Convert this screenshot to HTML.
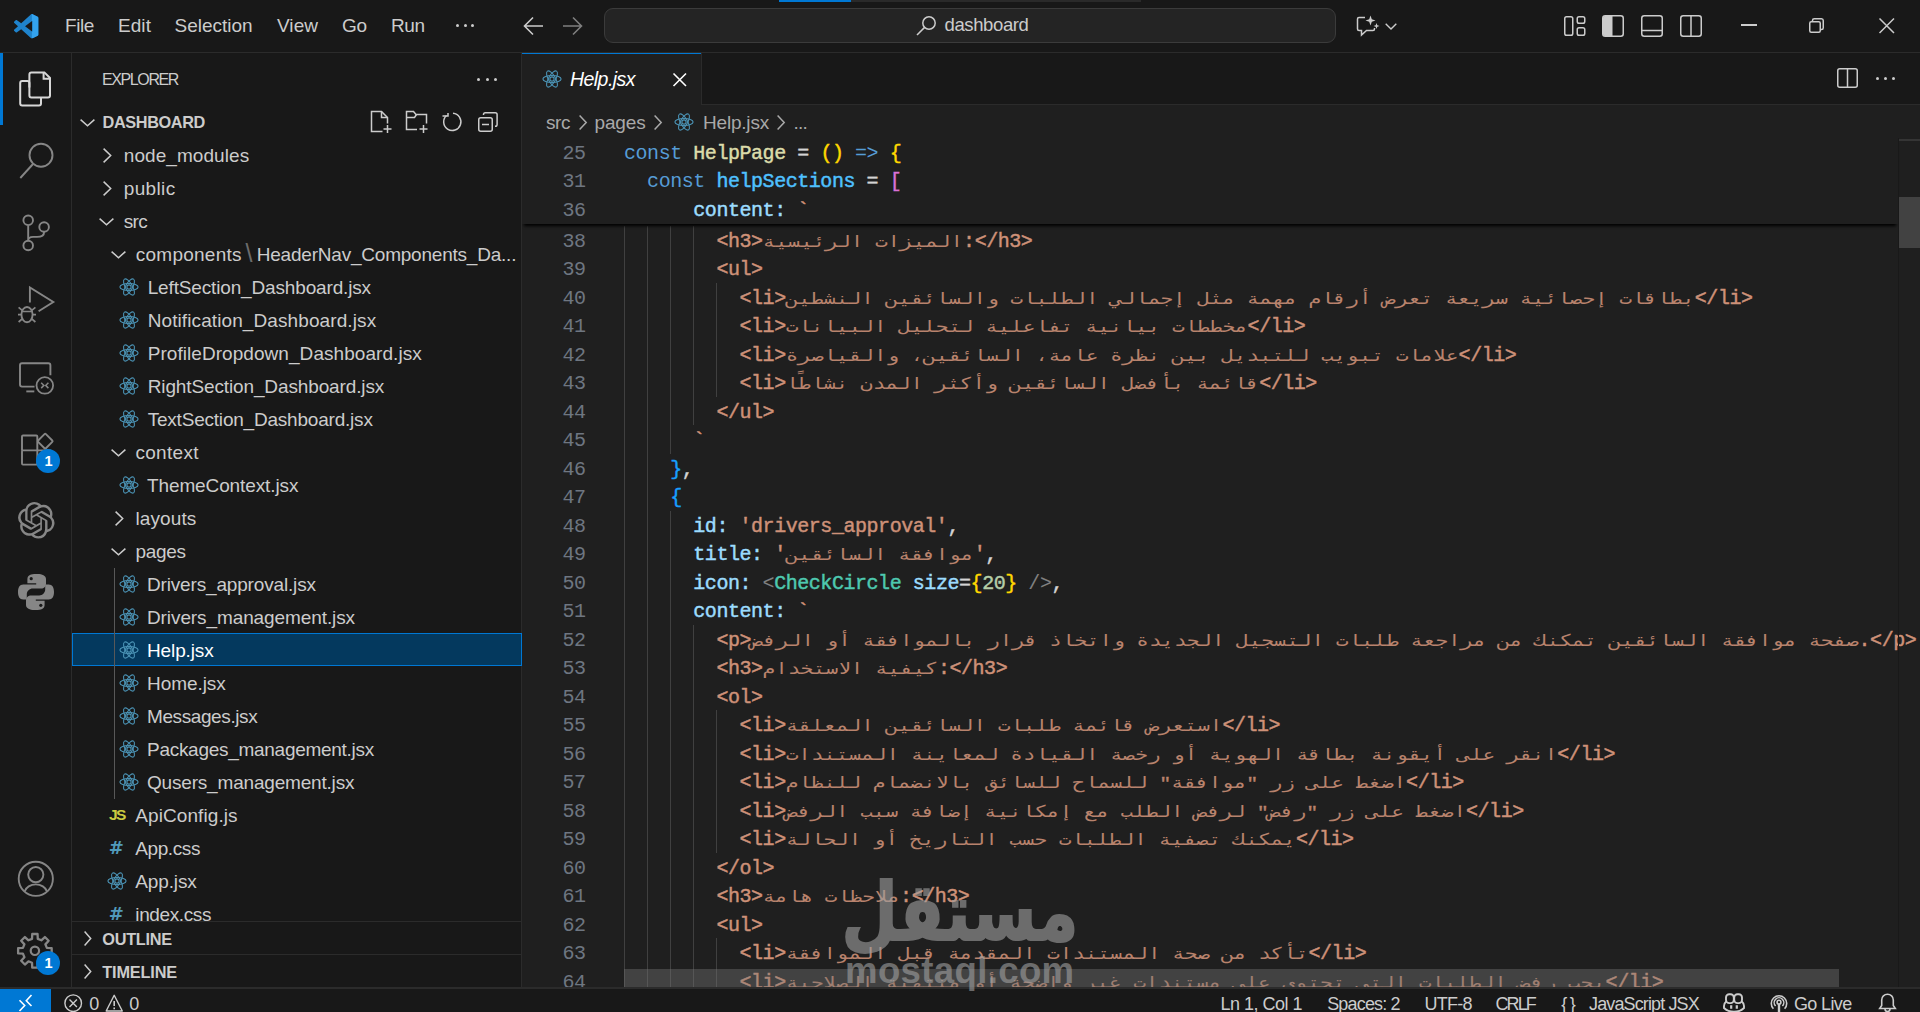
<!DOCTYPE html>
<html lang="en"><head><meta charset="utf-8"><title>Help.jsx - dashboard - Visual Studio Code</title>
<style>
*{box-sizing:border-box;margin:0;padding:0}
html,body{width:1920px;height:1012px;overflow:hidden;background:#181818}
body{position:relative;font-family:"Liberation Sans","DejaVu Sans",sans-serif;color:#cccccc;font-size:19px}
.abs{position:absolute}
.t{position:absolute;white-space:pre;line-height:1}
svg{position:absolute;overflow:visible}
#titlebar{position:absolute;left:0;top:0;width:1920px;height:53px;border-bottom:1px solid #2b2b2b;background:#181818}
#actbar{position:absolute;left:0;top:53px;width:72px;height:935px;border-right:1px solid #2b2b2b;background:#181818}
#sidebar{position:absolute;left:72px;top:53px;width:450px;height:935px;border-right:1px solid #2b2b2b;background:#181818;overflow:hidden}
#editor{position:absolute;left:522px;top:53px;width:1398px;height:935px;background:#1f1f1f;overflow:hidden}
#status{position:absolute;left:0;top:987px;width:1920px;height:33px;border-top:1px solid #2b2b2b;background:#181818}
.row{position:absolute;left:0;width:449px;height:33px}
.row .lbl{position:absolute;top:6px;white-space:pre;font-size:19px;line-height:22px;color:#cccccc;transform-origin:0 50%}
.hdr{font-weight:bold;font-size:16px}
.code{position:absolute;left:0;height:28.5px;line-height:28.5px;white-space:pre;font-family:"Liberation Mono","DejaVu Sans Mono",monospace;font-size:20px;letter-spacing:-0.452px;font-weight:normal;-webkit-text-stroke:0.45px;color:#d4d4d4}
.code span{line-height:28.5px}
.ln{position:absolute;left:0;width:62px;text-align:right;height:28.5px;line-height:28.5px;font-family:"Liberation Mono","DejaVu Sans Mono",monospace;font-size:20px;letter-spacing:-0.452px;color:#6e7681;white-space:pre}
.arun{display:inline-block;-webkit-text-stroke:0;opacity:0.88;letter-spacing:0;direction:rtl;font-family:"DejaVu Sans Mono",monospace;font-size:20.93px;font-weight:normal;line-height:20px;height:20px;transform:scaleY(0.78);transform-origin:0 17.24px;vertical-align:baseline}
.code .arun,.code .arun span{line-height:20px}
.arun .sp{font-family:"Liberation Mono","DejaVu Sans Mono",monospace;font-size:19.247px;letter-spacing:0;font-weight:normal;-webkit-text-stroke:0.45px}
.k{color:#569cd6;font-weight:normal;-webkit-text-stroke:0}
.f{color:#dcdcaa}
.c{color:#4fc1ff}
.p{color:#9cdcfe}
.s{color:#ce9178}
.g{color:#ffd700}
.o{color:#da70d6}
.b{color:#179fff}
.n{color:#b5cea8}
.tg{color:#4ec9b0}
.gr{color:#808080;font-weight:normal;-webkit-text-stroke:0}
.guide{position:absolute;width:1px;background:#404040}
</style></head>
<body>
<div id="titlebar"></div>
<div class="abs" style="left:851.00px;top:0.00px;width:290.00px;height:2.00px;background:#2a2a2a;"></div>
<div class="abs" style="left:779.00px;top:0.00px;width:72.00px;height:2.00px;background:#0078d4;"></div>
<svg style="left:13.70px;top:14.30px;" width="24.5" height="24.5" viewBox="0 0 100 100" fill="none"><defs><clipPath id="vsc"><path d="M70.9119 99.3171C72.4869 99.9307 74.2828 99.8914 75.8725 99.1264L96.4608 89.2197C98.6242 88.1787 100 85.9892 100 83.5872V16.4133C100 14.0113 98.6243 11.8218 96.4609 10.7808L75.8725 0.873756C73.7862 -0.130129 71.3446 0.11576 69.5135 1.44695C69.252 1.63711 69.0028 1.84943 68.769 2.08341L29.3551 38.0415L12.1872 25.0096C10.589 23.7965 8.35363 23.8959 6.86933 25.2461L1.36303 30.2549C-0.452552 31.9064 -0.454633 34.7627 1.35853 36.417L16.2471 50.0001L1.35853 63.5832C-0.454633 65.2374 -0.452552 68.0938 1.36303 69.7453L6.86933 74.7541C8.35363 76.1043 10.589 76.2037 12.1872 74.9905L29.3551 61.9587L68.769 97.9167C69.3925 98.5406 70.1246 99.0104 70.9119 99.3171ZM75.0152 27.2989L45.1091 50.0001L75.0152 72.7012V27.2989Z" clip-rule="evenodd"/></clipPath></defs><path d="M70.9119 99.3171C72.4869 99.9307 74.2828 99.8914 75.8725 99.1264L96.4608 89.2197C98.6242 88.1787 100 85.9892 100 83.5872V16.4133C100 14.0113 98.6243 11.8218 96.4609 10.7808L75.8725 0.873756C73.7862 -0.130129 71.3446 0.11576 69.5135 1.44695C69.252 1.63711 69.0028 1.84943 68.769 2.08341L29.3551 38.0415L12.1872 25.0096C10.589 23.7965 8.35363 23.8959 6.86933 25.2461L1.36303 30.2549C-0.452552 31.9064 -0.454633 34.7627 1.35853 36.417L16.2471 50.0001L1.35853 63.5832C-0.454633 65.2374 -0.452552 68.0938 1.36303 69.7453L6.86933 74.7541C8.35363 76.1043 10.589 76.2037 12.1872 74.9905L29.3551 61.9587L68.769 97.9167C69.3925 98.5406 70.1246 99.0104 70.9119 99.3171ZM75.0152 27.2989L45.1091 50.0001L75.0152 72.7012V27.2989Z" fill="#1f83cc" fill-rule="evenodd"/><rect x="73" y="0" width="27" height="100" fill="#33a3ef" clip-path="url(#vsc)"/></svg>
<div class="abs" style="left:456.00px;top:23.50px;width:3.00px;height:3.00px;background:#cccccc;border-radius:50%"></div>
<div class="abs" style="left:463.50px;top:23.50px;width:3.00px;height:3.00px;background:#cccccc;border-radius:50%"></div>
<div class="abs" style="left:471.00px;top:23.50px;width:3.00px;height:3.00px;background:#cccccc;border-radius:50%"></div>
<svg style="left:523.00px;top:16.00px;" width="21" height="20" viewBox="0 0 21 20" fill="none"><path d="M10 1.5L1.5 10l8.5 8.5M1.5 10H20" stroke="#cccccc" stroke-width="1.6"/></svg>
<svg style="left:562.00px;top:16.00px;" width="21" height="20" viewBox="0 0 21 20" fill="none"><path d="M11 1.5l8.5 8.5-8.5 8.5M19.5 10H1" stroke="#7f7f7f" stroke-width="1.6"/></svg>
<div class="abs" style="left:604.00px;top:8.00px;width:732.00px;height:35.00px;background:#242424;border:1px solid #3b3b3b;border-radius:9px"></div>
<svg style="left:916.00px;top:15.00px;" width="21" height="21" viewBox="0 0 21 21" fill="none"><circle cx="13" cy="8" r="6.2" stroke="#cccccc" stroke-width="1.5"/><path d="M8.6 12.4L1 20" stroke="#cccccc" stroke-width="1.5"/></svg>
<svg style="left:1356.00px;top:14.00px;" width="24" height="24" viewBox="0 0 24 24" fill="none"><path d="M9 3.5H3a1.5 1.5 0 0 0-1.5 1.5v10A1.5 1.5 0 0 0 3 16.5h2.5v4.5l5-4.5H17a1.5 1.5 0 0 0 1.5-1.5V14" stroke="#cccccc" stroke-width="1.5"/><path d="M14.5 1.5l1.3 3.7 3.7 1.3-3.7 1.3-1.3 3.7-1.3-3.7-3.7-1.3 3.7-1.3z" fill="#cccccc"/><path d="M20.5 9l.8 2.2 2.2.8-2.2.8-.8 2.2-.8-2.2-2.2-.8 2.2-.8z" fill="#cccccc"/></svg>
<svg style="left:1385.00px;top:23.00px;" width="12" height="7" viewBox="0 0 12 7" fill="none"><path d="M0.7 0.7l5.3 5.3 5.3-5.3" stroke="#cccccc" stroke-width="1.4"/></svg>
<svg style="left:1563.50px;top:16.00px;" width="22" height="20" viewBox="0 0 22 20" fill="none"><rect x="0.75" y="0.75" width="8" height="18.5" rx="1.8" stroke="#cccccc" stroke-width="1.5"/><rect x="13.25" y="0.75" width="7.5" height="6.5" rx="1.8" stroke="#cccccc" stroke-width="1.5"/><rect x="13.25" y="11.75" width="7.5" height="7.5" rx="1.8" stroke="#cccccc" stroke-width="1.5"/></svg>
<svg style="left:1602.00px;top:15.00px;" width="22" height="22" viewBox="0 0 22 22" fill="none"><rect x="0.75" y="0.75" width="20.5" height="20.5" rx="2.5" stroke="#cccccc" stroke-width="1.5"/><path d="M1 3a2 2 0 0 1 2-2h7.5v20H3a2 2 0 0 1-2-2z" fill="#cccccc"/></svg>
<svg style="left:1641.00px;top:15.00px;" width="22" height="22" viewBox="0 0 22 22" fill="none"><rect x="0.75" y="0.75" width="20.5" height="20.5" rx="2.5" stroke="#cccccc" stroke-width="1.5"/><path d="M1 15.5h20" stroke="#cccccc" stroke-width="1.5"/></svg>
<svg style="left:1679.50px;top:15.00px;" width="22" height="22" viewBox="0 0 22 22" fill="none"><rect x="0.75" y="0.75" width="20.5" height="20.5" rx="2.5" stroke="#cccccc" stroke-width="1.5"/><path d="M11 1v20" stroke="#cccccc" stroke-width="1.5"/></svg>
<div class="abs" style="left:1741.00px;top:24.30px;width:15.50px;height:1.80px;background:#cccccc;"></div>
<svg style="left:1809.00px;top:18.00px;" width="15" height="15" viewBox="0 0 15 15" fill="none"><rect x="0.75" y="3.75" width="10.5" height="10.5" rx="1.5" stroke="#cccccc" stroke-width="1.5"/><path d="M3.5 3.5V2.5A1.8 1.8 0 0 1 5.3 0.75h7.2A1.8 1.8 0 0 1 14.25 2.5v7.2a1.8 1.8 0 0 1-1.75 1.8H11.5" stroke="#cccccc" stroke-width="1.5"/></svg>
<svg style="left:1878.50px;top:18.00px;" width="15.5" height="15.5" viewBox="0 0 15.5 15.5" fill="none"><path d="M0.5 0.5l14.5 14.5M15 0.5L0.5 15" stroke="#cccccc" stroke-width="1.5"/></svg>
<span class="t" style="left:65.00px;top:16.42px;color:#cccccc;font-size:19.00px;font-weight:normal;font-style:normal;letter-spacing:-0.406px;">File</span>
<span class="t" style="left:118.00px;top:16.42px;color:#cccccc;font-size:19.00px;font-weight:normal;font-style:normal;letter-spacing:0.062px;">Edit</span>
<span class="t" style="left:174.50px;top:16.42px;color:#cccccc;font-size:19.00px;font-weight:normal;font-style:normal;letter-spacing:-0.019px;">Selection</span>
<span class="t" style="left:277.00px;top:16.42px;color:#cccccc;font-size:19.00px;font-weight:normal;font-style:normal;letter-spacing:0.039px;">View</span>
<span class="t" style="left:342.00px;top:16.42px;color:#cccccc;font-size:19.00px;font-weight:normal;font-style:normal;letter-spacing:-0.180px;">Go</span>
<span class="t" style="left:391.00px;top:16.42px;color:#cccccc;font-size:19.00px;font-weight:normal;font-style:normal;letter-spacing:-0.453px;">Run</span>
<span class="t" style="left:944.50px;top:16.34px;color:#cccccc;font-size:18.50px;font-weight:normal;font-style:normal;letter-spacing:-0.382px;">dashboard</span>
<div id="actbar"></div>
<div class="abs" style="left:0.00px;top:53.00px;width:3.00px;height:72.00px;background:#0078d4;"></div>
<svg style="left:0.00px;top:53.00px;" width="72" height="72" viewBox="0 0 72 72" fill="none"><path d="M29.4 34.5v-4.5a2 2 0 0 0-2-2h-5.2a2 2 0 0 0-2 2v20.5a2 2 0 0 0 2 2h16.8a2 2 0 0 0 2-2v-5.5" stroke="#d7d7d7" stroke-width="2" /><path d="M31.4 19.4h13l5.6 5.6v17.6a2 2 0 0 1-2 2H31.4a2 2 0 0 1-2-2V21.4a2 2 0 0 1 2-2z" stroke="#d7d7d7" stroke-width="2"/><path d="M43.6 19.6v6.2h6.2" stroke="#d7d7d7" stroke-width="2"/></svg>
<svg style="left:0.00px;top:125.00px;" width="72" height="72" viewBox="0 0 72 72" fill="none"><circle cx="41" cy="30.3" r="11.5" stroke="#868686" stroke-width="1.9"/><path d="M33 39l-12.7 14" stroke="#868686" stroke-width="1.9"/></svg>
<svg style="left:0.00px;top:197.00px;" width="72" height="72" viewBox="0 0 72 72" fill="none"><circle cx="28.2" cy="23.3" r="4.8" stroke="#868686" stroke-width="1.9"/><circle cx="28.2" cy="48.5" r="4.8" stroke="#868686" stroke-width="1.9"/><circle cx="44.1" cy="30" r="4.8" stroke="#868686" stroke-width="1.9"/><path d="M28.2 28.2v15.5M44.1 34.9c0 4-3 5-7 5h-4c-3 0-4.9 1.5-4.9 3.8" stroke="#868686" stroke-width="1.9"/></svg>
<svg style="left:0.00px;top:269.00px;" width="72" height="72" viewBox="0 0 72 72" fill="none"><path d="M29.9 33.5V18.5L53.3 33 38.6 42.2" stroke="#868686" stroke-width="1.9" stroke-linejoin="miter"/><ellipse cx="27" cy="45.6" rx="5.6" ry="7.6" stroke="#868686" stroke-width="1.9"/><path d="M21.5 42.5h11M18 45.6h3.4M32.6 45.6H36M18.6 38.4l3.6 3M35.4 38.4l-3.6 3M18.6 53l3.6-3.2M35.4 53l-3.6-3.2" stroke="#868686" stroke-width="1.7"/></svg>
<svg style="left:0.00px;top:341.00px;" width="72" height="72" viewBox="0 0 72 72" fill="none"><path d="M34.5 45.6H22a2 2 0 0 1-2-2V24.2a2 2 0 0 1 2-2h26.4a2 2 0 0 1 2 2v10" stroke="#868686" stroke-width="1.9"/><path d="M26.3 50.4h8" stroke="#868686" stroke-width="1.9"/><circle cx="44.8" cy="44.4" r="8.3" stroke="#868686" stroke-width="1.8"/><path d="M41.2 41.7l2.700 2.700-2.700 2.700M48.400 41.7l-2.700 2.700 2.700 2.700" stroke="#868686" stroke-width="1.5"/></svg>
<svg style="left:0.00px;top:413.00px;" width="72" height="72" viewBox="0 0 72 72" fill="none"><path d="M37.3 37.4H23a1 1 0 0 0-1 1v12.2a1 1 0 0 0 1 1h14.3zM37.3 37.4V23.5a1 1 0 0 0-1-1H23a1 1 0 0 0-1 1v13.9M37.3 37.4h13a1 1 0 0 1 1 1v12.2a1 1 0 0 1-1 1h-13" stroke="#868686" stroke-width="1.9"/><rect x="39.7" y="22.7" width="11" height="11" rx="1" transform="rotate(45 45.2 28.2)" stroke="#868686" stroke-width="1.9"/></svg>
<div class="abs" style="left:36.00px;top:448.80px;width:24.00px;height:24.00px;background:#0078d4;border-radius:50%"></div>
<svg style="left:17.50px;top:502.00px;" width="36.6" height="36.6" viewBox="0 0 24 24" fill="none"><path d="M22.2819 9.8211a5.9847 5.9847 0 0 0-.5157-4.9108 6.0462 6.0462 0 0 0-6.5098-2.9A6.0651 6.0651 0 0 0 4.9807 4.1818a5.9847 5.9847 0 0 0-3.9977 2.9 6.0462 6.0462 0 0 0 .7427 7.0966 5.98 5.98 0 0 0 .511 4.9107 6.051 6.051 0 0 0 6.5146 2.9001A5.9847 5.9847 0 0 0 13.2599 24a6.0557 6.0557 0 0 0 5.7718-4.2058 5.9894 5.9894 0 0 0 3.9977-2.9001 6.0557 6.0557 0 0 0-.7475-7.0729zm-9.022 12.6081a4.4755 4.4755 0 0 1-2.8764-1.0408l.1419-.0804 4.7783-2.7582a.7948.7948 0 0 0 .3927-.6813v-6.7369l2.02 1.1686a.071.071 0 0 1 .038.052v5.5826a4.504 4.504 0 0 1-4.4945 4.4944zm-9.6607-4.1254a4.4708 4.4708 0 0 1-.5346-3.0137l.142.0852 4.783 2.7582a.7712.7712 0 0 0 .7806 0l5.8428-3.3685v2.3324a.0804.0804 0 0 1-.0332.0615L9.74 19.9502a4.4992 4.4992 0 0 1-6.1408-1.6464zM2.3408 7.8956a4.485 4.485 0 0 1 2.3655-1.9728V11.6a.7664.7664 0 0 0 .3879.6765l5.8144 3.3543-2.0201 1.1685a.0757.0757 0 0 1-.071 0l-4.8303-2.7865A4.504 4.504 0 0 1 2.3408 7.872zm16.5963 3.8558L13.1038 8.364 15.1192 7.2a.0757.0757 0 0 1 .071 0l4.8303 2.7913a4.4944 4.4944 0 0 1-.6765 8.1042v-5.6772a.79.79 0 0 0-.407-.667zm2.0107-3.0231l-.142-.0852-4.7735-2.7818a.7759.7759 0 0 0-.7854 0L9.409 9.2297V6.8974a.0662.0662 0 0 1 .0284-.0615l4.8303-2.7866a4.4992 4.4992 0 0 1 6.6802 4.66zM8.3065 12.863l-2.02-1.1638a.0804.0804 0 0 1-.038-.0567V6.0742a4.4992 4.4992 0 0 1 7.3757-3.4537l-.142.0805L8.704 5.459a.7948.7948 0 0 0-.3927.6813zm1.0976-2.3654l2.602-1.4998 2.6069 1.4998v2.9994l-2.5974 1.4997-2.6067-1.4997Z" fill="#868686"/></svg>
<svg style="left:17.80px;top:574.00px;" width="36" height="36" viewBox="0 0 36 36" fill="none"><path d="M17.8 0c-4.6 0-8.4 1.2-8.4 5v4.2h8.8v1.3H5.3C1.6 10.500 0 13.5 0 18s1.600 7.500 5.300 7.500H8.800V20.500c0-3.300 2.800-5.900 6-5.900h8.400c2.700 0 4.800-2.200 4.800-4.900V5c0-3.400-4-5-8.200-5z" fill="#868686"/><path d="M18.2 36c4.600 0 8.400-1.200 8.400-5v-4.200h-8.800v-1.300h12.900c3.700 0 5.300-3 5.300-7.500s-1.600-7.500-5.300-7.500h-3.500v5c0 3.300-2.800 5.900-6 5.900h-8.400c-2.700 0-4.800 2.200-4.800 4.900V31c0 3.400 4 5 8.200 5z" fill="#868686"/><circle cx="13.2" cy="4.700" r="1.600" fill="#181818"/><circle cx="22.800" cy="31.300" r="1.600" fill="#181818"/></svg>
<svg style="left:0.00px;top:843.00px;" width="72" height="72" viewBox="0 0 72 72" fill="none"><circle cx="35.8" cy="35.8" r="17.1" stroke="#868686" stroke-width="1.9"/><circle cx="35.8" cy="31.6" r="7.6" stroke="#868686" stroke-width="1.9"/><path d="M24.6 48.5a11.6 9.6 0 0 1 22.4 0" stroke="#868686" stroke-width="1.9"/></svg>
<svg style="left:0.00px;top:915.00px;" width="72" height="72" viewBox="0 0 72 72" fill="none"><path d="M32.24 19.01 L37.56 19.01 L37.77 23.84 L41.33 25.31 L44.89 22.05 L48.65 25.81 L45.39 29.37 L46.86 32.93 L51.69 33.14 L51.69 38.46 L46.86 38.67 L45.39 42.23 L48.65 45.79 L44.89 49.55 L41.33 46.29 L37.77 47.76 L37.56 52.59 L32.24 52.59 L32.03 47.76 L28.47 46.29 L24.91 49.55 L21.15 45.79 L24.41 42.23 L22.94 38.67 L18.11 38.46 L18.11 33.14 L22.94 32.93 L24.41 29.37 L21.15 25.81 L24.91 22.05 L28.47 25.31 L32.03 23.84Z" stroke="#868686" stroke-width="2.3" stroke-linejoin="round"/><circle cx="34.9" cy="35.800" r="4.2" stroke="#868686" stroke-width="2.2"/></svg>
<div class="abs" style="left:36.00px;top:951.00px;width:24.00px;height:24.00px;background:#0078d4;border-radius:50%"></div>
<span class="t" style="left:44.40px;top:453.73px;color:#ffffff;font-size:14.50px;font-weight:bold;font-style:normal;">1</span>
<span class="t" style="left:44.40px;top:955.93px;color:#ffffff;font-size:14.50px;font-weight:bold;font-style:normal;">1</span>
<div id="sidebar"></div>
<div class="abs" style="left:477.00px;top:77.50px;width:3.00px;height:3.00px;background:#cccccc;border-radius:50%"></div>
<div class="abs" style="left:485.50px;top:77.50px;width:3.00px;height:3.00px;background:#cccccc;border-radius:50%"></div>
<div class="abs" style="left:494.00px;top:77.50px;width:3.00px;height:3.00px;background:#cccccc;border-radius:50%"></div>
<svg style="left:79.70px;top:118.75px;" width="15" height="7.5" viewBox="0 0 15 7.5" fill="none"><polyline points="0.6,0.6 7.5,6.7 14.4,0.6" stroke="#cccccc" stroke-width="1.5" stroke-linejoin="miter"/></svg>
<div class="abs" style="left:72.00px;top:633.00px;width:449.50px;height:33.00px;background:#04395e;border:1px solid #0078d4"></div>
<div class="abs" style="left:114.00px;top:567.50px;width:1.00px;height:231.00px;background:#585858;"></div>
<svg style="left:103.35px;top:147.50px;" width="8.5" height="15" viewBox="0 0 8.5 15" fill="none"><polyline points="0.6,0.6 7.7,7.5 0.6,14.4" stroke="#cccccc" stroke-width="1.5" stroke-linejoin="miter"/></svg>
<svg style="left:103.35px;top:180.50px;" width="8.5" height="15" viewBox="0 0 8.5 15" fill="none"><polyline points="0.6,0.6 7.7,7.5 0.6,14.4" stroke="#cccccc" stroke-width="1.5" stroke-linejoin="miter"/></svg>
<svg style="left:99.30px;top:217.75px;" width="15" height="7.5" viewBox="0 0 15 7.5" fill="none"><polyline points="0.6,0.6 7.5,6.7 14.4,0.6" stroke="#cccccc" stroke-width="1.5" stroke-linejoin="miter"/></svg>
<svg style="left:111.00px;top:250.75px;" width="15" height="7.5" viewBox="0 0 15 7.5" fill="none"><polyline points="0.6,0.6 7.5,6.7 14.4,0.6" stroke="#cccccc" stroke-width="1.5" stroke-linejoin="miter"/></svg>
<svg style="left:118.50px;top:277.50px;" width="20" height="18" viewBox="0 0 20 18" fill="none"><ellipse cx="10" cy="9" rx="9.1" ry="3.5" transform="rotate(0 10 9)" stroke="#4b93b5" stroke-width="1.1"/><ellipse cx="10" cy="9" rx="9.1" ry="3.5" transform="rotate(60 10 9)" stroke="#4b93b5" stroke-width="1.1"/><ellipse cx="10" cy="9" rx="9.1" ry="3.5" transform="rotate(120 10 9)" stroke="#4b93b5" stroke-width="1.1"/><circle cx="10" cy="9" r="2.1" stroke="#4b93b5" stroke-width="1.1"/></svg>
<svg style="left:118.50px;top:310.50px;" width="20" height="18" viewBox="0 0 20 18" fill="none"><ellipse cx="10" cy="9" rx="9.1" ry="3.5" transform="rotate(0 10 9)" stroke="#4b93b5" stroke-width="1.1"/><ellipse cx="10" cy="9" rx="9.1" ry="3.5" transform="rotate(60 10 9)" stroke="#4b93b5" stroke-width="1.1"/><ellipse cx="10" cy="9" rx="9.1" ry="3.5" transform="rotate(120 10 9)" stroke="#4b93b5" stroke-width="1.1"/><circle cx="10" cy="9" r="2.1" stroke="#4b93b5" stroke-width="1.1"/></svg>
<svg style="left:118.50px;top:343.50px;" width="20" height="18" viewBox="0 0 20 18" fill="none"><ellipse cx="10" cy="9" rx="9.1" ry="3.5" transform="rotate(0 10 9)" stroke="#4b93b5" stroke-width="1.1"/><ellipse cx="10" cy="9" rx="9.1" ry="3.5" transform="rotate(60 10 9)" stroke="#4b93b5" stroke-width="1.1"/><ellipse cx="10" cy="9" rx="9.1" ry="3.5" transform="rotate(120 10 9)" stroke="#4b93b5" stroke-width="1.1"/><circle cx="10" cy="9" r="2.1" stroke="#4b93b5" stroke-width="1.1"/></svg>
<svg style="left:118.50px;top:376.50px;" width="20" height="18" viewBox="0 0 20 18" fill="none"><ellipse cx="10" cy="9" rx="9.1" ry="3.5" transform="rotate(0 10 9)" stroke="#4b93b5" stroke-width="1.1"/><ellipse cx="10" cy="9" rx="9.1" ry="3.5" transform="rotate(60 10 9)" stroke="#4b93b5" stroke-width="1.1"/><ellipse cx="10" cy="9" rx="9.1" ry="3.5" transform="rotate(120 10 9)" stroke="#4b93b5" stroke-width="1.1"/><circle cx="10" cy="9" r="2.1" stroke="#4b93b5" stroke-width="1.1"/></svg>
<svg style="left:118.50px;top:409.50px;" width="20" height="18" viewBox="0 0 20 18" fill="none"><ellipse cx="10" cy="9" rx="9.1" ry="3.5" transform="rotate(0 10 9)" stroke="#4b93b5" stroke-width="1.1"/><ellipse cx="10" cy="9" rx="9.1" ry="3.5" transform="rotate(60 10 9)" stroke="#4b93b5" stroke-width="1.1"/><ellipse cx="10" cy="9" rx="9.1" ry="3.5" transform="rotate(120 10 9)" stroke="#4b93b5" stroke-width="1.1"/><circle cx="10" cy="9" r="2.1" stroke="#4b93b5" stroke-width="1.1"/></svg>
<svg style="left:111.00px;top:448.75px;" width="15" height="7.5" viewBox="0 0 15 7.5" fill="none"><polyline points="0.6,0.6 7.5,6.7 14.4,0.6" stroke="#cccccc" stroke-width="1.5" stroke-linejoin="miter"/></svg>
<svg style="left:118.50px;top:475.50px;" width="20" height="18" viewBox="0 0 20 18" fill="none"><ellipse cx="10" cy="9" rx="9.1" ry="3.5" transform="rotate(0 10 9)" stroke="#4b93b5" stroke-width="1.1"/><ellipse cx="10" cy="9" rx="9.1" ry="3.5" transform="rotate(60 10 9)" stroke="#4b93b5" stroke-width="1.1"/><ellipse cx="10" cy="9" rx="9.1" ry="3.5" transform="rotate(120 10 9)" stroke="#4b93b5" stroke-width="1.1"/><circle cx="10" cy="9" r="2.1" stroke="#4b93b5" stroke-width="1.1"/></svg>
<svg style="left:114.95px;top:510.50px;" width="8.5" height="15" viewBox="0 0 8.5 15" fill="none"><polyline points="0.6,0.6 7.7,7.5 0.6,14.4" stroke="#cccccc" stroke-width="1.5" stroke-linejoin="miter"/></svg>
<svg style="left:111.00px;top:547.75px;" width="15" height="7.5" viewBox="0 0 15 7.5" fill="none"><polyline points="0.6,0.6 7.5,6.7 14.4,0.6" stroke="#cccccc" stroke-width="1.5" stroke-linejoin="miter"/></svg>
<svg style="left:118.50px;top:574.50px;" width="20" height="18" viewBox="0 0 20 18" fill="none"><ellipse cx="10" cy="9" rx="9.1" ry="3.5" transform="rotate(0 10 9)" stroke="#4b93b5" stroke-width="1.1"/><ellipse cx="10" cy="9" rx="9.1" ry="3.5" transform="rotate(60 10 9)" stroke="#4b93b5" stroke-width="1.1"/><ellipse cx="10" cy="9" rx="9.1" ry="3.5" transform="rotate(120 10 9)" stroke="#4b93b5" stroke-width="1.1"/><circle cx="10" cy="9" r="2.1" stroke="#4b93b5" stroke-width="1.1"/></svg>
<svg style="left:118.50px;top:607.50px;" width="20" height="18" viewBox="0 0 20 18" fill="none"><ellipse cx="10" cy="9" rx="9.1" ry="3.5" transform="rotate(0 10 9)" stroke="#4b93b5" stroke-width="1.1"/><ellipse cx="10" cy="9" rx="9.1" ry="3.5" transform="rotate(60 10 9)" stroke="#4b93b5" stroke-width="1.1"/><ellipse cx="10" cy="9" rx="9.1" ry="3.5" transform="rotate(120 10 9)" stroke="#4b93b5" stroke-width="1.1"/><circle cx="10" cy="9" r="2.1" stroke="#4b93b5" stroke-width="1.1"/></svg>
<svg style="left:118.50px;top:640.50px;" width="20" height="18" viewBox="0 0 20 18" fill="none"><ellipse cx="10" cy="9" rx="9.1" ry="3.5" transform="rotate(0 10 9)" stroke="#4b93b5" stroke-width="1.1"/><ellipse cx="10" cy="9" rx="9.1" ry="3.5" transform="rotate(60 10 9)" stroke="#4b93b5" stroke-width="1.1"/><ellipse cx="10" cy="9" rx="9.1" ry="3.5" transform="rotate(120 10 9)" stroke="#4b93b5" stroke-width="1.1"/><circle cx="10" cy="9" r="2.1" stroke="#4b93b5" stroke-width="1.1"/></svg>
<svg style="left:118.50px;top:673.50px;" width="20" height="18" viewBox="0 0 20 18" fill="none"><ellipse cx="10" cy="9" rx="9.1" ry="3.5" transform="rotate(0 10 9)" stroke="#4b93b5" stroke-width="1.1"/><ellipse cx="10" cy="9" rx="9.1" ry="3.5" transform="rotate(60 10 9)" stroke="#4b93b5" stroke-width="1.1"/><ellipse cx="10" cy="9" rx="9.1" ry="3.5" transform="rotate(120 10 9)" stroke="#4b93b5" stroke-width="1.1"/><circle cx="10" cy="9" r="2.1" stroke="#4b93b5" stroke-width="1.1"/></svg>
<svg style="left:118.50px;top:706.50px;" width="20" height="18" viewBox="0 0 20 18" fill="none"><ellipse cx="10" cy="9" rx="9.1" ry="3.5" transform="rotate(0 10 9)" stroke="#4b93b5" stroke-width="1.1"/><ellipse cx="10" cy="9" rx="9.1" ry="3.5" transform="rotate(60 10 9)" stroke="#4b93b5" stroke-width="1.1"/><ellipse cx="10" cy="9" rx="9.1" ry="3.5" transform="rotate(120 10 9)" stroke="#4b93b5" stroke-width="1.1"/><circle cx="10" cy="9" r="2.1" stroke="#4b93b5" stroke-width="1.1"/></svg>
<svg style="left:118.50px;top:739.50px;" width="20" height="18" viewBox="0 0 20 18" fill="none"><ellipse cx="10" cy="9" rx="9.1" ry="3.5" transform="rotate(0 10 9)" stroke="#4b93b5" stroke-width="1.1"/><ellipse cx="10" cy="9" rx="9.1" ry="3.5" transform="rotate(60 10 9)" stroke="#4b93b5" stroke-width="1.1"/><ellipse cx="10" cy="9" rx="9.1" ry="3.5" transform="rotate(120 10 9)" stroke="#4b93b5" stroke-width="1.1"/><circle cx="10" cy="9" r="2.1" stroke="#4b93b5" stroke-width="1.1"/></svg>
<svg style="left:118.50px;top:772.50px;" width="20" height="18" viewBox="0 0 20 18" fill="none"><ellipse cx="10" cy="9" rx="9.1" ry="3.5" transform="rotate(0 10 9)" stroke="#4b93b5" stroke-width="1.1"/><ellipse cx="10" cy="9" rx="9.1" ry="3.5" transform="rotate(60 10 9)" stroke="#4b93b5" stroke-width="1.1"/><ellipse cx="10" cy="9" rx="9.1" ry="3.5" transform="rotate(120 10 9)" stroke="#4b93b5" stroke-width="1.1"/><circle cx="10" cy="9" r="2.1" stroke="#4b93b5" stroke-width="1.1"/></svg>
<svg style="left:106.50px;top:871.50px;" width="20" height="18" viewBox="0 0 20 18" fill="none"><ellipse cx="10" cy="9" rx="9.1" ry="3.5" transform="rotate(0 10 9)" stroke="#4b93b5" stroke-width="1.1"/><ellipse cx="10" cy="9" rx="9.1" ry="3.5" transform="rotate(60 10 9)" stroke="#4b93b5" stroke-width="1.1"/><ellipse cx="10" cy="9" rx="9.1" ry="3.5" transform="rotate(120 10 9)" stroke="#4b93b5" stroke-width="1.1"/><circle cx="10" cy="9" r="2.1" stroke="#4b93b5" stroke-width="1.1"/></svg>
<svg style="left:370.00px;top:110.00px;" width="23" height="24" viewBox="0 0 23 24" fill="none"><path d="M12.5 21.5H1.5V1.5h10l6 6v6" stroke="#cccccc" stroke-width="1.5"/><path d="M11.5 1.5v6h6" stroke="#cccccc" stroke-width="1.5"/><path d="M17.5 15v8M13.5 19h8" stroke="#cccccc" stroke-width="1.5"/></svg>
<svg style="left:404.50px;top:110.00px;" width="24" height="24" viewBox="0 0 24 24" fill="none"><path d="M12 19.5H1.5V1.5h7l2.5 3h10.5v9" stroke="#cccccc" stroke-width="1.5"/><path d="M1.5 7.5h8l2-3" stroke="#cccccc" stroke-width="1.5"/><path d="M18.5 15v8M14.5 19h8" stroke="#cccccc" stroke-width="1.5"/></svg>
<svg style="left:441.00px;top:111.00px;" width="21" height="22" viewBox="0 0 21 22" fill="none"><path d="M5.5 4.5A8.6 8.6 0 1 0 12 2.3" stroke="#cccccc" stroke-width="1.5"/><path d="M1.5 3.5h5.5v-3" stroke="#cccccc" stroke-width="1.5" transform="translate(0 1.5)"/></svg>
<svg style="left:478.00px;top:112.00px;" width="20" height="20" viewBox="0 0 20 20" fill="none"><rect x="0.75" y="5.75" width="13.5" height="13.5" rx="2" stroke="#cccccc" stroke-width="1.5"/><path d="M4 12.5h7" stroke="#cccccc" stroke-width="1.5"/><path d="M5.5 3V2.5a1.8 1.8 0 0 1 1.8-1.8h10a1.8 1.8 0 0 1 1.8 1.8v10a1.8 1.8 0 0 1-1.8 1.8H17" stroke="#cccccc" stroke-width="1.5"/></svg>
<span class="t" style="left:102.00px;top:72.46px;color:#cccccc;font-size:16.00px;font-weight:normal;font-style:normal;letter-spacing:-1.393px;">EXPLORER</span>
<span class="t" style="left:102.50px;top:114.20px;color:#cccccc;font-size:16.30px;font-weight:bold;font-style:normal;letter-spacing:-0.370px;">DASHBOARD</span>
<span class="t" style="left:123.75px;top:145.92px;color:#cccccc;font-size:19.00px;font-weight:normal;font-style:normal;letter-spacing:0.070px;">node_modules</span>
<span class="t" style="left:123.75px;top:178.92px;color:#cccccc;font-size:19.00px;font-weight:normal;font-style:normal;letter-spacing:0.349px;">public</span>
<span class="t" style="left:123.75px;top:211.92px;color:#cccccc;font-size:19.00px;font-weight:normal;font-style:normal;letter-spacing:-0.693px;">src</span>
<span class="t" style="left:135.75px;top:244.92px;color:#cccccc;font-size:19.00px;font-weight:normal;font-style:normal;letter-spacing:0.248px;">components</span>
<span class="t" style="left:147.70px;top:277.92px;color:#cccccc;font-size:19.00px;font-weight:normal;font-style:normal;letter-spacing:-0.152px;">LeftSection_Dashboard.jsx</span>
<span class="t" style="left:147.70px;top:310.92px;color:#cccccc;font-size:19.00px;font-weight:normal;font-style:normal;letter-spacing:0.099px;">Notification_Dashboard.jsx</span>
<span class="t" style="left:147.70px;top:343.92px;color:#cccccc;font-size:19.00px;font-weight:normal;font-style:normal;letter-spacing:0.056px;">ProfileDropdown_Dashboard.jsx</span>
<span class="t" style="left:147.70px;top:376.92px;color:#cccccc;font-size:19.00px;font-weight:normal;font-style:normal;letter-spacing:-0.125px;">RightSection_Dashboard.jsx</span>
<span class="t" style="left:147.70px;top:409.92px;color:#cccccc;font-size:19.00px;font-weight:normal;font-style:normal;letter-spacing:-0.210px;">TextSection_Dashboard.jsx</span>
<span class="t" style="left:135.40px;top:442.92px;color:#cccccc;font-size:19.00px;font-weight:normal;font-style:normal;letter-spacing:0.319px;">context</span>
<span class="t" style="left:147.00px;top:475.92px;color:#cccccc;font-size:19.00px;font-weight:normal;font-style:normal;letter-spacing:-0.114px;">ThemeContext.jsx</span>
<span class="t" style="left:135.40px;top:508.92px;color:#cccccc;font-size:19.00px;font-weight:normal;font-style:normal;letter-spacing:0.128px;">layouts</span>
<span class="t" style="left:135.40px;top:541.92px;color:#cccccc;font-size:19.00px;font-weight:normal;font-style:normal;letter-spacing:-0.276px;">pages</span>
<span class="t" style="left:147.00px;top:574.92px;color:#cccccc;font-size:19.00px;font-weight:normal;font-style:normal;letter-spacing:-0.166px;">Drivers_approval.jsx</span>
<span class="t" style="left:147.00px;top:607.92px;color:#cccccc;font-size:19.00px;font-weight:normal;font-style:normal;letter-spacing:-0.097px;">Drivers_management.jsx</span>
<span class="t" style="left:147.00px;top:640.92px;color:#ffffff;font-size:19.00px;font-weight:normal;font-style:normal;letter-spacing:-0.122px;">Help.jsx</span>
<span class="t" style="left:147.00px;top:673.92px;color:#cccccc;font-size:19.00px;font-weight:normal;font-style:normal;letter-spacing:-0.061px;">Home.jsx</span>
<span class="t" style="left:147.00px;top:706.92px;color:#cccccc;font-size:19.00px;font-weight:normal;font-style:normal;letter-spacing:-0.401px;">Messages.jsx</span>
<span class="t" style="left:147.00px;top:739.92px;color:#cccccc;font-size:19.00px;font-weight:normal;font-style:normal;letter-spacing:-0.279px;">Packages_management.jsx</span>
<span class="t" style="left:147.00px;top:772.92px;color:#cccccc;font-size:19.00px;font-weight:normal;font-style:normal;letter-spacing:-0.187px;">Qusers_management.jsx</span>
<span class="t" style="left:135.30px;top:805.92px;color:#cccccc;font-size:19.00px;font-weight:normal;font-style:normal;letter-spacing:0.084px;">ApiConfig.js</span>
<span class="t" style="left:109.00px;top:807.48px;color:#cbcb41;font-size:15.50px;font-weight:bold;font-style:normal;letter-spacing:-1.734px;">JS</span>
<span class="t" style="left:135.30px;top:838.92px;color:#cccccc;font-size:19.00px;font-weight:normal;font-style:normal;letter-spacing:-0.413px;">App.css</span>
<span class="t" style="left:108.80px;top:839.26px;color:#519aba;font-size:18.00px;font-weight:bold;font-style:normal;font-family:'DejaVu Sans',sans-serif;">#</span>
<span class="t" style="left:135.30px;top:871.92px;color:#cccccc;font-size:19.00px;font-weight:normal;font-style:normal;letter-spacing:-0.130px;">App.jsx</span>
<span class="t" style="left:135.30px;top:904.92px;color:#cccccc;font-size:19.00px;font-weight:normal;font-style:normal;letter-spacing:-0.389px;">index.css</span>
<span class="t" style="left:108.80px;top:905.26px;color:#519aba;font-size:18.00px;font-weight:bold;font-style:normal;font-family:'DejaVu Sans',sans-serif;">#</span>
<span class="t" style="left:245.50px;top:241.34px;color:#6c6c6c;font-size:25.00px;font-weight:normal;font-style:normal;">\</span>
<span class="t" style="left:256.75px;top:244.92px;color:#cccccc;font-size:19.00px;font-weight:normal;font-style:normal;letter-spacing:-0.215px;">HeaderNav_Components_Da...</span>
<div class="abs" style="left:72.00px;top:921.00px;width:449.00px;height:67.00px;background:#181818;"></div>
<div class="abs" style="left:72.00px;top:921.00px;width:449.00px;height:1.00px;background:#2b2b2b;"></div>
<div class="abs" style="left:72.00px;top:954.00px;width:449.00px;height:1.00px;background:#2b2b2b;"></div>
<svg style="left:83.75px;top:931.00px;" width="7.5" height="15" viewBox="0 0 7.5 15" fill="none"><polyline points="0.6,0.6 6.7,7.5 0.6,14.4" stroke="#cccccc" stroke-width="1.5" stroke-linejoin="miter"/></svg>
<svg style="left:83.75px;top:964.00px;" width="7.5" height="15" viewBox="0 0 7.5 15" fill="none"><polyline points="0.6,0.6 6.7,7.5 0.6,14.4" stroke="#cccccc" stroke-width="1.5" stroke-linejoin="miter"/></svg>
<span class="t" style="left:102.30px;top:931.20px;color:#cccccc;font-size:16.30px;font-weight:bold;font-style:normal;letter-spacing:-0.293px;">OUTLINE</span>
<span class="t" style="left:102.30px;top:964.20px;color:#cccccc;font-size:16.30px;font-weight:bold;font-style:normal;letter-spacing:-0.161px;">TIMELINE</span>
<div id="editor">
<div class="abs" id="lines" style="left:0;top:0;width:1398px;height:935px">
<div class="guide" style="left:102.00px;top:172.75px;height:28.50px"></div>
<div class="guide" style="left:125.10px;top:172.75px;height:28.50px"></div>
<div class="guide" style="left:148.20px;top:172.75px;height:28.50px"></div>
<div class="guide" style="left:171.30px;top:172.75px;height:28.50px"></div>
<div class="ln" style="top:174.55px;width:63.5px">38</div>
<div class="code" style="top:174.55px;left:194.40px"><span class="s">&lt;h3&gt;<span class="arun">الميزات<span class="sp"> </span>الرئيسية</span>:&lt;/h3&gt;</span></div>
<div class="guide" style="left:102.00px;top:201.25px;height:28.50px"></div>
<div class="guide" style="left:125.10px;top:201.25px;height:28.50px"></div>
<div class="guide" style="left:148.20px;top:201.25px;height:28.50px"></div>
<div class="guide" style="left:171.30px;top:201.25px;height:28.50px"></div>
<div class="ln" style="top:203.05px;width:63.5px">39</div>
<div class="code" style="top:203.05px;left:194.40px"><span class="s">&lt;ul&gt;</span></div>
<div class="guide" style="left:102.00px;top:229.75px;height:28.50px"></div>
<div class="guide" style="left:125.10px;top:229.75px;height:28.50px"></div>
<div class="guide" style="left:148.20px;top:229.75px;height:28.50px"></div>
<div class="guide" style="left:171.30px;top:229.75px;height:28.50px"></div>
<div class="guide" style="left:194.40px;top:229.75px;height:28.50px"></div>
<div class="ln" style="top:231.55px;width:63.5px">40</div>
<div class="code" style="top:231.55px;left:217.50px"><span class="s">&lt;li&gt;<span class="arun">بطاقات<span class="sp"> </span>إحصائية<span class="sp"> </span>سريعة<span class="sp"> </span>تعرض<span class="sp"> </span>أرقام<span class="sp"> </span>مهمة<span class="sp"> </span>مثل<span class="sp"> </span>إجمالي<span class="sp"> </span>الطلبات<span class="sp"> </span>والسائقين<span class="sp"> </span>النشطين</span>&lt;/li&gt;</span></div>
<div class="guide" style="left:102.00px;top:258.25px;height:28.50px"></div>
<div class="guide" style="left:125.10px;top:258.25px;height:28.50px"></div>
<div class="guide" style="left:148.20px;top:258.25px;height:28.50px"></div>
<div class="guide" style="left:171.30px;top:258.25px;height:28.50px"></div>
<div class="guide" style="left:194.40px;top:258.25px;height:28.50px"></div>
<div class="ln" style="top:260.05px;width:63.5px">41</div>
<div class="code" style="top:260.05px;left:217.50px"><span class="s">&lt;li&gt;<span class="arun">مخططات<span class="sp"> </span>بيانية<span class="sp"> </span>تفاعلية<span class="sp"> </span>لتحليل<span class="sp"> </span>البيانات</span>&lt;/li&gt;</span></div>
<div class="guide" style="left:102.00px;top:286.75px;height:28.50px"></div>
<div class="guide" style="left:125.10px;top:286.75px;height:28.50px"></div>
<div class="guide" style="left:148.20px;top:286.75px;height:28.50px"></div>
<div class="guide" style="left:171.30px;top:286.75px;height:28.50px"></div>
<div class="guide" style="left:194.40px;top:286.75px;height:28.50px"></div>
<div class="ln" style="top:288.55px;width:63.5px">42</div>
<div class="code" style="top:288.55px;left:217.50px"><span class="s">&lt;li&gt;<span class="arun">علامات<span class="sp"> </span>تبويب<span class="sp"> </span>للتبديل<span class="sp"> </span>بين<span class="sp"> </span>نظرة<span class="sp"> </span>عامة،<span class="sp"> </span>السائقين،<span class="sp"> </span>والقياصرة</span>&lt;/li&gt;</span></div>
<div class="guide" style="left:102.00px;top:315.25px;height:28.50px"></div>
<div class="guide" style="left:125.10px;top:315.25px;height:28.50px"></div>
<div class="guide" style="left:148.20px;top:315.25px;height:28.50px"></div>
<div class="guide" style="left:171.30px;top:315.25px;height:28.50px"></div>
<div class="guide" style="left:194.40px;top:315.25px;height:28.50px"></div>
<div class="ln" style="top:317.05px;width:63.5px">43</div>
<div class="code" style="top:317.05px;left:217.50px"><span class="s">&lt;li&gt;<span class="arun">قائمة<span class="sp"> </span>بأفضل<span class="sp"> </span>السائقين<span class="sp"> </span>وأكثر<span class="sp"> </span>المدن<span class="sp"> </span>نشاطًا</span>&lt;/li&gt;</span></div>
<div class="guide" style="left:102.00px;top:343.75px;height:28.50px"></div>
<div class="guide" style="left:125.10px;top:343.75px;height:28.50px"></div>
<div class="guide" style="left:148.20px;top:343.75px;height:28.50px"></div>
<div class="guide" style="left:171.30px;top:343.75px;height:28.50px"></div>
<div class="ln" style="top:345.55px;width:63.5px">44</div>
<div class="code" style="top:345.55px;left:194.40px"><span class="s">&lt;/ul&gt;</span></div>
<div class="guide" style="left:102.00px;top:372.25px;height:28.50px"></div>
<div class="guide" style="left:125.10px;top:372.25px;height:28.50px"></div>
<div class="guide" style="left:148.20px;top:372.25px;height:28.50px"></div>
<div class="ln" style="top:374.05px;width:63.5px">45</div>
<div class="code" style="top:374.05px;left:171.30px"><span class="s">`</span></div>
<div class="guide" style="left:102.00px;top:400.75px;height:28.50px"></div>
<div class="guide" style="left:125.10px;top:400.75px;height:28.50px"></div>
<div class="ln" style="top:402.55px;width:63.5px">46</div>
<div class="code" style="top:402.55px;left:148.20px"><span class="b">}</span>,</div>
<div class="guide" style="left:102.00px;top:429.25px;height:28.50px"></div>
<div class="guide" style="left:125.10px;top:429.25px;height:28.50px"></div>
<div class="ln" style="top:431.05px;width:63.5px">47</div>
<div class="code" style="top:431.05px;left:148.20px"><span class="b">{</span></div>
<div class="guide" style="left:102.00px;top:457.75px;height:28.50px"></div>
<div class="guide" style="left:125.10px;top:457.75px;height:28.50px"></div>
<div class="guide" style="left:148.20px;top:457.75px;height:28.50px"></div>
<div class="ln" style="top:459.55px;width:63.5px">48</div>
<div class="code" style="top:459.55px;left:171.30px"><span class="p">id:</span> <span class="s">'drivers_approval'</span>,</div>
<div class="guide" style="left:102.00px;top:486.25px;height:28.50px"></div>
<div class="guide" style="left:125.10px;top:486.25px;height:28.50px"></div>
<div class="guide" style="left:148.20px;top:486.25px;height:28.50px"></div>
<div class="ln" style="top:488.05px;width:63.5px">49</div>
<div class="code" style="top:488.05px;left:171.30px"><span class="p">title:</span> <span class="s">'<span class="arun">موافقة<span class="sp"> </span>السائقين</span>'</span>,</div>
<div class="guide" style="left:102.00px;top:514.75px;height:28.50px"></div>
<div class="guide" style="left:125.10px;top:514.75px;height:28.50px"></div>
<div class="guide" style="left:148.20px;top:514.75px;height:28.50px"></div>
<div class="ln" style="top:516.55px;width:63.5px">50</div>
<div class="code" style="top:516.55px;left:171.30px"><span class="p">icon:</span> <span class="gr">&lt;</span><span class="tg">CheckCircle</span> <span class="p">size</span>=<span class="g">{</span><span class="n">20</span><span class="g">}</span> <span class="gr">/&gt;</span>,</div>
<div class="guide" style="left:102.00px;top:543.25px;height:28.50px"></div>
<div class="guide" style="left:125.10px;top:543.25px;height:28.50px"></div>
<div class="guide" style="left:148.20px;top:543.25px;height:28.50px"></div>
<div class="ln" style="top:545.05px;width:63.5px">51</div>
<div class="code" style="top:545.05px;left:171.30px"><span class="p">content:</span> <span class="s">`</span></div>
<div class="guide" style="left:102.00px;top:571.75px;height:28.50px"></div>
<div class="guide" style="left:125.10px;top:571.75px;height:28.50px"></div>
<div class="guide" style="left:148.20px;top:571.75px;height:28.50px"></div>
<div class="guide" style="left:171.30px;top:571.75px;height:28.50px"></div>
<div class="ln" style="top:573.55px;width:63.5px">52</div>
<div class="code" style="top:573.55px;left:194.40px"><span class="s">&lt;p&gt;<span class="arun">صفحة<span class="sp"> </span>موافقة<span class="sp"> </span>السائقين<span class="sp"> </span>تمكنك<span class="sp"> </span>من<span class="sp"> </span>مراجعة<span class="sp"> </span>طلبات<span class="sp"> </span>التسجيل<span class="sp"> </span>الجديدة<span class="sp"> </span>واتخاذ<span class="sp"> </span>قرار<span class="sp"> </span>بالموافقة<span class="sp"> </span>أو<span class="sp"> </span>الرفض</span>.&lt;/p&gt;</span></div>
<div class="guide" style="left:102.00px;top:600.25px;height:28.50px"></div>
<div class="guide" style="left:125.10px;top:600.25px;height:28.50px"></div>
<div class="guide" style="left:148.20px;top:600.25px;height:28.50px"></div>
<div class="guide" style="left:171.30px;top:600.25px;height:28.50px"></div>
<div class="ln" style="top:602.05px;width:63.5px">53</div>
<div class="code" style="top:602.05px;left:194.40px"><span class="s">&lt;h3&gt;<span class="arun">كيفية<span class="sp"> </span>الاستخدام</span>:&lt;/h3&gt;</span></div>
<div class="guide" style="left:102.00px;top:628.75px;height:28.50px"></div>
<div class="guide" style="left:125.10px;top:628.75px;height:28.50px"></div>
<div class="guide" style="left:148.20px;top:628.75px;height:28.50px"></div>
<div class="guide" style="left:171.30px;top:628.75px;height:28.50px"></div>
<div class="ln" style="top:630.55px;width:63.5px">54</div>
<div class="code" style="top:630.55px;left:194.40px"><span class="s">&lt;ol&gt;</span></div>
<div class="guide" style="left:102.00px;top:657.25px;height:28.50px"></div>
<div class="guide" style="left:125.10px;top:657.25px;height:28.50px"></div>
<div class="guide" style="left:148.20px;top:657.25px;height:28.50px"></div>
<div class="guide" style="left:171.30px;top:657.25px;height:28.50px"></div>
<div class="guide" style="left:194.40px;top:657.25px;height:28.50px"></div>
<div class="ln" style="top:659.05px;width:63.5px">55</div>
<div class="code" style="top:659.05px;left:217.50px"><span class="s">&lt;li&gt;<span class="arun">استعرض<span class="sp"> </span>قائمة<span class="sp"> </span>طلبات<span class="sp"> </span>السائقين<span class="sp"> </span>المعلقة</span>&lt;/li&gt;</span></div>
<div class="guide" style="left:102.00px;top:685.75px;height:28.50px"></div>
<div class="guide" style="left:125.10px;top:685.75px;height:28.50px"></div>
<div class="guide" style="left:148.20px;top:685.75px;height:28.50px"></div>
<div class="guide" style="left:171.30px;top:685.75px;height:28.50px"></div>
<div class="guide" style="left:194.40px;top:685.75px;height:28.50px"></div>
<div class="ln" style="top:687.55px;width:63.5px">56</div>
<div class="code" style="top:687.55px;left:217.50px"><span class="s">&lt;li&gt;<span class="arun">انقر<span class="sp"> </span>على<span class="sp"> </span>أيقونة<span class="sp"> </span>بطاقة<span class="sp"> </span>الهوية<span class="sp"> </span>أو<span class="sp"> </span>رخصة<span class="sp"> </span>القيادة<span class="sp"> </span>لمعاينة<span class="sp"> </span>المستندات</span>&lt;/li&gt;</span></div>
<div class="guide" style="left:102.00px;top:714.25px;height:28.50px"></div>
<div class="guide" style="left:125.10px;top:714.25px;height:28.50px"></div>
<div class="guide" style="left:148.20px;top:714.25px;height:28.50px"></div>
<div class="guide" style="left:171.30px;top:714.25px;height:28.50px"></div>
<div class="guide" style="left:194.40px;top:714.25px;height:28.50px"></div>
<div class="ln" style="top:716.05px;width:63.5px">57</div>
<div class="code" style="top:716.05px;left:217.50px"><span class="s">&lt;li&gt;<span class="arun">اضغط<span class="sp"> </span>على<span class="sp"> </span>زر<span class="sp"> "</span>موافقة<span class="sp">" </span>للسماح<span class="sp"> </span>للسائق<span class="sp"> </span>بالانضمام<span class="sp"> </span>للنظام</span>&lt;/li&gt;</span></div>
<div class="guide" style="left:102.00px;top:742.75px;height:28.50px"></div>
<div class="guide" style="left:125.10px;top:742.75px;height:28.50px"></div>
<div class="guide" style="left:148.20px;top:742.75px;height:28.50px"></div>
<div class="guide" style="left:171.30px;top:742.75px;height:28.50px"></div>
<div class="guide" style="left:194.40px;top:742.75px;height:28.50px"></div>
<div class="ln" style="top:744.55px;width:63.5px">58</div>
<div class="code" style="top:744.55px;left:217.50px"><span class="s">&lt;li&gt;<span class="arun">اضغط<span class="sp"> </span>على<span class="sp"> </span>زر<span class="sp"> "</span>رفض<span class="sp">" </span>لرفض<span class="sp"> </span>الطلب<span class="sp"> </span>مع<span class="sp"> </span>إمكانية<span class="sp"> </span>إضافة<span class="sp"> </span>سبب<span class="sp"> </span>الرفض</span>&lt;/li&gt;</span></div>
<div class="guide" style="left:102.00px;top:771.25px;height:28.50px"></div>
<div class="guide" style="left:125.10px;top:771.25px;height:28.50px"></div>
<div class="guide" style="left:148.20px;top:771.25px;height:28.50px"></div>
<div class="guide" style="left:171.30px;top:771.25px;height:28.50px"></div>
<div class="guide" style="left:194.40px;top:771.25px;height:28.50px"></div>
<div class="ln" style="top:773.05px;width:63.5px">59</div>
<div class="code" style="top:773.05px;left:217.50px"><span class="s">&lt;li&gt;<span class="arun">يمكنك<span class="sp"> </span>تصفية<span class="sp"> </span>الطلبات<span class="sp"> </span>حسب<span class="sp"> </span>التاريخ<span class="sp"> </span>أو<span class="sp"> </span>الحالة</span>&lt;/li&gt;</span></div>
<div class="guide" style="left:102.00px;top:799.75px;height:28.50px"></div>
<div class="guide" style="left:125.10px;top:799.75px;height:28.50px"></div>
<div class="guide" style="left:148.20px;top:799.75px;height:28.50px"></div>
<div class="guide" style="left:171.30px;top:799.75px;height:28.50px"></div>
<div class="ln" style="top:801.55px;width:63.5px">60</div>
<div class="code" style="top:801.55px;left:194.40px"><span class="s">&lt;/ol&gt;</span></div>
<div class="guide" style="left:102.00px;top:828.25px;height:28.50px"></div>
<div class="guide" style="left:125.10px;top:828.25px;height:28.50px"></div>
<div class="guide" style="left:148.20px;top:828.25px;height:28.50px"></div>
<div class="guide" style="left:171.30px;top:828.25px;height:28.50px"></div>
<div class="ln" style="top:830.05px;width:63.5px">61</div>
<div class="code" style="top:830.05px;left:194.40px"><span class="s">&lt;h3&gt;<span class="arun">ملاحظات<span class="sp"> </span>هامة</span>:&lt;/h3&gt;</span></div>
<div class="guide" style="left:102.00px;top:856.75px;height:28.50px"></div>
<div class="guide" style="left:125.10px;top:856.75px;height:28.50px"></div>
<div class="guide" style="left:148.20px;top:856.75px;height:28.50px"></div>
<div class="guide" style="left:171.30px;top:856.75px;height:28.50px"></div>
<div class="ln" style="top:858.55px;width:63.5px">62</div>
<div class="code" style="top:858.55px;left:194.40px"><span class="s">&lt;ul&gt;</span></div>
<div class="guide" style="left:102.00px;top:885.25px;height:28.50px"></div>
<div class="guide" style="left:125.10px;top:885.25px;height:28.50px"></div>
<div class="guide" style="left:148.20px;top:885.25px;height:28.50px"></div>
<div class="guide" style="left:171.30px;top:885.25px;height:28.50px"></div>
<div class="guide" style="left:194.40px;top:885.25px;height:28.50px"></div>
<div class="ln" style="top:887.05px;width:63.5px">63</div>
<div class="code" style="top:887.05px;left:217.50px"><span class="s">&lt;li&gt;<span class="arun">تأكد<span class="sp"> </span>من<span class="sp"> </span>صحة<span class="sp"> </span>المستندات<span class="sp"> </span>المقدمة<span class="sp"> </span>قبل<span class="sp"> </span>الموافقة</span>&lt;/li&gt;</span></div>
<div class="guide" style="left:102.00px;top:913.75px;height:28.50px"></div>
<div class="guide" style="left:125.10px;top:913.75px;height:28.50px"></div>
<div class="guide" style="left:148.20px;top:913.75px;height:28.50px"></div>
<div class="guide" style="left:171.30px;top:913.75px;height:28.50px"></div>
<div class="guide" style="left:194.40px;top:913.75px;height:28.50px"></div>
<div class="ln" style="top:915.55px;width:63.5px">64</div>
<div class="code" style="top:915.55px;left:217.50px"><span class="s">&lt;li&gt;<span class="arun">يجب<span class="sp"> </span>رفض<span class="sp"> </span>الطلبات<span class="sp"> </span>التي<span class="sp"> </span>تحتوي<span class="sp"> </span>على<span class="sp"> </span>مستندات<span class="sp"> </span>غير<span class="sp"> </span>واضحة<span class="sp"> </span>أو<span class="sp"> </span>منتهية<span class="sp"> </span>الصلاحية</span>&lt;/li&gt;</span></div>
</div>
<div class="abs" id="sticky" style="left:0;top:85px;width:1376px;height:85.5px;background:#1f1f1f;box-shadow:0 4px 3px -2px #000000"></div>
<div class="ln" style="top:86.80px;width:63.5px">25</div>
<div class="code" style="top:86.80px;left:102.00px"><span class="k">const</span> <span class="f">HelpPage</span> = <span class="g">()</span> <span class="k">=&gt;</span> <span class="g">{</span></div>
<div class="ln" style="top:115.30px;width:63.5px">31</div>
<div class="code" style="top:115.30px;left:125.10px"><span class="k">const</span> <span class="c">helpSections</span> = <span class="o">[</span></div>
<div class="ln" style="top:143.80px;width:63.5px">36</div>
<div class="code" style="top:143.80px;left:171.30px"><span class="p">content:</span> <span class="s">`</span></div>
<div class="abs" style="left:1376.00px;top:85.00px;width:1.00px;height:850.00px;background:#191919;"></div>
<div class="abs" style="left:1377.00px;top:86.00px;width:21.00px;height:1.50px;background:#353535;"></div>
<div class="abs" style="left:1377.00px;top:144.00px;width:21.00px;height:51.00px;background:rgba(121,121,121,0.4);"></div>
<div class="abs" style="left:102.00px;top:916.00px;width:1215.00px;height:18.00px;background:rgba(121,121,121,0.4);"></div>
</div>
<div class="abs" style="left:522.00px;top:53.00px;width:1398.00px;height:52.00px;background:#181818;"></div>
<div class="abs" style="left:522.00px;top:104.00px;width:1398.00px;height:1.00px;background:#2b2b2b;"></div>
<div class="abs" style="left:522.00px;top:53.00px;width:179.00px;height:52.00px;background:#1f1f1f;"></div>
<div class="abs" style="left:522.00px;top:53.00px;width:179.00px;height:1.00px;background:#0078d4;"></div>
<div class="abs" style="left:701.00px;top:53.00px;width:1.00px;height:51.00px;background:#2b2b2b;"></div>
<svg style="left:541.50px;top:69.70px;" width="20" height="18" viewBox="0 0 20 18" fill="none"><ellipse cx="10" cy="9" rx="9.1" ry="3.5" transform="rotate(0 10 9)" stroke="#4b93b5" stroke-width="1.1"/><ellipse cx="10" cy="9" rx="9.1" ry="3.5" transform="rotate(60 10 9)" stroke="#4b93b5" stroke-width="1.1"/><ellipse cx="10" cy="9" rx="9.1" ry="3.5" transform="rotate(120 10 9)" stroke="#4b93b5" stroke-width="1.1"/><circle cx="10" cy="9" r="2.1" stroke="#4b93b5" stroke-width="1.1"/></svg>
<svg style="left:673.40px;top:72.50px;" width="13.5" height="13.5" viewBox="0 0 13.5 13.5" fill="none"><path d="M0.5 0.5l12.5 12.5M13 0.5L0.5 13" stroke="#ffffff" stroke-width="1.6"/></svg>
<svg style="left:1837.00px;top:68.00px;" width="21" height="20" viewBox="0 0 21 20" fill="none"><rect x="0.75" y="0.75" width="19.5" height="18.5" rx="2" stroke="#cccccc" stroke-width="1.5"/><path d="M10.500 1v18" stroke="#cccccc" stroke-width="1.5"/></svg>
<div class="abs" style="left:1876.00px;top:77.30px;width:3.00px;height:3.00px;background:#cccccc;border-radius:50%"></div>
<div class="abs" style="left:1884.00px;top:77.30px;width:3.00px;height:3.00px;background:#cccccc;border-radius:50%"></div>
<div class="abs" style="left:1892.00px;top:77.30px;width:3.00px;height:3.00px;background:#cccccc;border-radius:50%"></div>
<svg style="left:579.00px;top:114.50px;" width="8" height="15" viewBox="0 0 8 15" fill="none"><polyline points="0.6,0.6 7.2,7.5 0.6,14.4" stroke="#a9a9a9" stroke-width="1.5" stroke-linejoin="miter"/></svg>
<svg style="left:654.30px;top:114.50px;" width="8" height="15" viewBox="0 0 8 15" fill="none"><polyline points="0.6,0.6 7.2,7.5 0.6,14.4" stroke="#a9a9a9" stroke-width="1.5" stroke-linejoin="miter"/></svg>
<svg style="left:674.00px;top:112.60px;" width="20" height="18" viewBox="0 0 20 18" fill="none"><ellipse cx="10" cy="9" rx="9.1" ry="3.5" transform="rotate(0 10 9)" stroke="#4b93b5" stroke-width="1.1"/><ellipse cx="10" cy="9" rx="9.1" ry="3.5" transform="rotate(60 10 9)" stroke="#4b93b5" stroke-width="1.1"/><ellipse cx="10" cy="9" rx="9.1" ry="3.5" transform="rotate(120 10 9)" stroke="#4b93b5" stroke-width="1.1"/><circle cx="10" cy="9" r="2.1" stroke="#4b93b5" stroke-width="1.1"/></svg>
<svg style="left:777.30px;top:114.50px;" width="8" height="15" viewBox="0 0 8 15" fill="none"><polyline points="0.6,0.6 7.2,7.5 0.6,14.4" stroke="#a9a9a9" stroke-width="1.5" stroke-linejoin="miter"/></svg>
<span class="t" style="left:570.00px;top:69.89px;color:#ffffff;font-size:19.50px;font-weight:normal;font-style:italic;letter-spacing:-0.545px;">Help.jsx</span>
<span class="t" style="left:546.00px;top:112.72px;color:#a9a9a9;font-size:19.00px;font-weight:normal;font-style:normal;letter-spacing:-0.443px;">src</span>
<span class="t" style="left:594.50px;top:112.72px;color:#a9a9a9;font-size:19.00px;font-weight:normal;font-style:normal;letter-spacing:-0.156px;">pages</span>
<span class="t" style="left:703.00px;top:112.72px;color:#a9a9a9;font-size:19.00px;font-weight:normal;font-style:normal;letter-spacing:-0.197px;">Help.jsx</span>
<span class="t" style="left:793.50px;top:112.72px;color:#a9a9a9;font-size:19.00px;font-weight:normal;font-style:normal;letter-spacing:-0.781px;">...</span>
<div class="abs" style="left:0.00px;top:987.00px;width:1920.00px;height:33.00px;background:#181818;border-top:2px solid #2b2b2b"></div>
<div class="abs" style="left:0.00px;top:989.00px;width:51.00px;height:33.00px;background:#0078d4;"></div>
<svg style="left:17.00px;top:994.00px;" width="18" height="18" viewBox="0 0 18 18" fill="none"><path d="M2.500 6.200l5.200 5.300-5.200 5.500M14.500 1l-5.200 5.700 5.200 5.300" stroke="#ffffff" stroke-width="1.600"/></svg>
<svg style="left:64.00px;top:994.00px;" width="18.5" height="18.5" viewBox="0 0 18.5 18.5" fill="none"><circle cx="9.2" cy="9.2" r="8.3" stroke="#cccccc" stroke-width="1.4"/><path d="M5.500 5.500l7.400 7.400M12.900 5.500l-7.400 7.400" stroke="#cccccc" stroke-width="1.4"/></svg>
<svg style="left:105.00px;top:993.50px;" width="18.5" height="18" viewBox="0 0 18.5 18" fill="none"><path d="M9.200 1.300L17.300 17H1.200z" stroke="#cccccc" stroke-width="1.4" stroke-linejoin="round"/><path d="M9.200 7v5M9.200 13.600v1.700" stroke="#cccccc" stroke-width="1.600"/></svg>
<svg style="left:1722.50px;top:993.00px;" width="22" height="20" viewBox="0 0 22 20" fill="none"><rect x="3" y="1.300" width="7.800" height="8.800" rx="3.200" stroke="#cccccc" stroke-width="1.900"/><rect x="11.200" y="1.300" width="7.800" height="8.800" rx="3.200" stroke="#cccccc" stroke-width="1.900"/><path d="M3.200 8.500C1.700 9.700 1 11.200 1 13v2c2.500 2.500 6 3.800 10 3.800s7.500-1.300 10-3.800v-2c0-1.800-.7-3.300-2.200-4.500" stroke="#cccccc" stroke-width="1.900"/><path d="M8.200 12.200v3.600M13.800 12.200v3.600" stroke="#cccccc" stroke-width="2.200"/></svg>
<svg style="left:1769.50px;top:994.00px;" width="18" height="19" viewBox="0 0 18 19" fill="none"><circle cx="9" cy="8.200" r="1.900" stroke="#cccccc" stroke-width="1.600"/><path d="M9 10v9" stroke="#cccccc" stroke-width="2.400"/><path d="M5.600 12a4.800 4.800 0 1 1 6.800 0" stroke="#cccccc" stroke-width="1.600"/><path d="M3.400 14.800a7.700 7.700 0 1 1 11.200 0" stroke="#cccccc" stroke-width="1.600"/></svg>
<svg style="left:1878.00px;top:993.00px;" width="19" height="20" viewBox="0 0 19 20" fill="none"><path d="M9.500 1.200a5.800 5.800 0 0 0-5.800 5.800v5.500L1.700 15.500h15.600l-2-3V7a5.800 5.800 0 0 0-5.800-5.800z" stroke="#cccccc" stroke-width="1.600"/><path d="M7 16a2.500 2.500 0 0 0 5 0" stroke="#cccccc" stroke-width="1.600"/></svg>
<span class="t" style="left:89.30px;top:994.76px;color:#cccccc;font-size:18.00px;font-weight:normal;font-style:normal;">0</span>
<span class="t" style="left:129.30px;top:994.76px;color:#cccccc;font-size:18.00px;font-weight:normal;font-style:normal;">0</span>
<span class="t" style="left:1220.40px;top:994.76px;color:#cccccc;font-size:18.00px;font-weight:normal;font-style:normal;letter-spacing:-0.497px;">Ln 1, Col 1</span>
<span class="t" style="left:1327.20px;top:994.76px;color:#cccccc;font-size:18.00px;font-weight:normal;font-style:normal;letter-spacing:-0.829px;">Spaces: 2</span>
<span class="t" style="left:1424.60px;top:994.76px;color:#cccccc;font-size:18.00px;font-weight:normal;font-style:normal;letter-spacing:-0.800px;">UTF-8</span>
<span class="t" style="left:1495.50px;top:994.76px;color:#cccccc;font-size:18.00px;font-weight:normal;font-style:normal;letter-spacing:-1.929px;">CRLF</span>
<span class="t" style="left:1561.20px;top:994.76px;color:#cccccc;font-size:18.00px;font-weight:normal;font-style:normal;letter-spacing:2.534px;">{}</span>
<span class="t" style="left:1589.00px;top:994.76px;color:#cccccc;font-size:18.00px;font-weight:normal;font-style:normal;letter-spacing:-0.875px;">JavaScript JSX</span>
<span class="t" style="left:1794.00px;top:994.76px;color:#cccccc;font-size:18.00px;font-weight:normal;font-style:normal;letter-spacing:-0.635px;">Go Live</span>
<div class="abs" style="left:810px;top:858px;width:300px;height:110px;text-align:center;direction:rtl;font-family:'DejaVu Sans',sans-serif;font-weight:bold;font-size:80px;line-height:110px;color:#a0a0a0;-webkit-text-stroke:2px #a0a0a0;opacity:0.6;white-space:pre;transform:scaleX(0.81);transform-origin:50% 50%">مستقل</div>
<div class="abs" style="left:845px;top:946.30px;height:50px;font-family:'Liberation Sans',sans-serif;font-weight:bold;font-size:36.6px;line-height:50px;letter-spacing:0.352px;color:#a0a0a0;opacity:0.6;white-space:pre">mostaql.com</div>
</body></html>
